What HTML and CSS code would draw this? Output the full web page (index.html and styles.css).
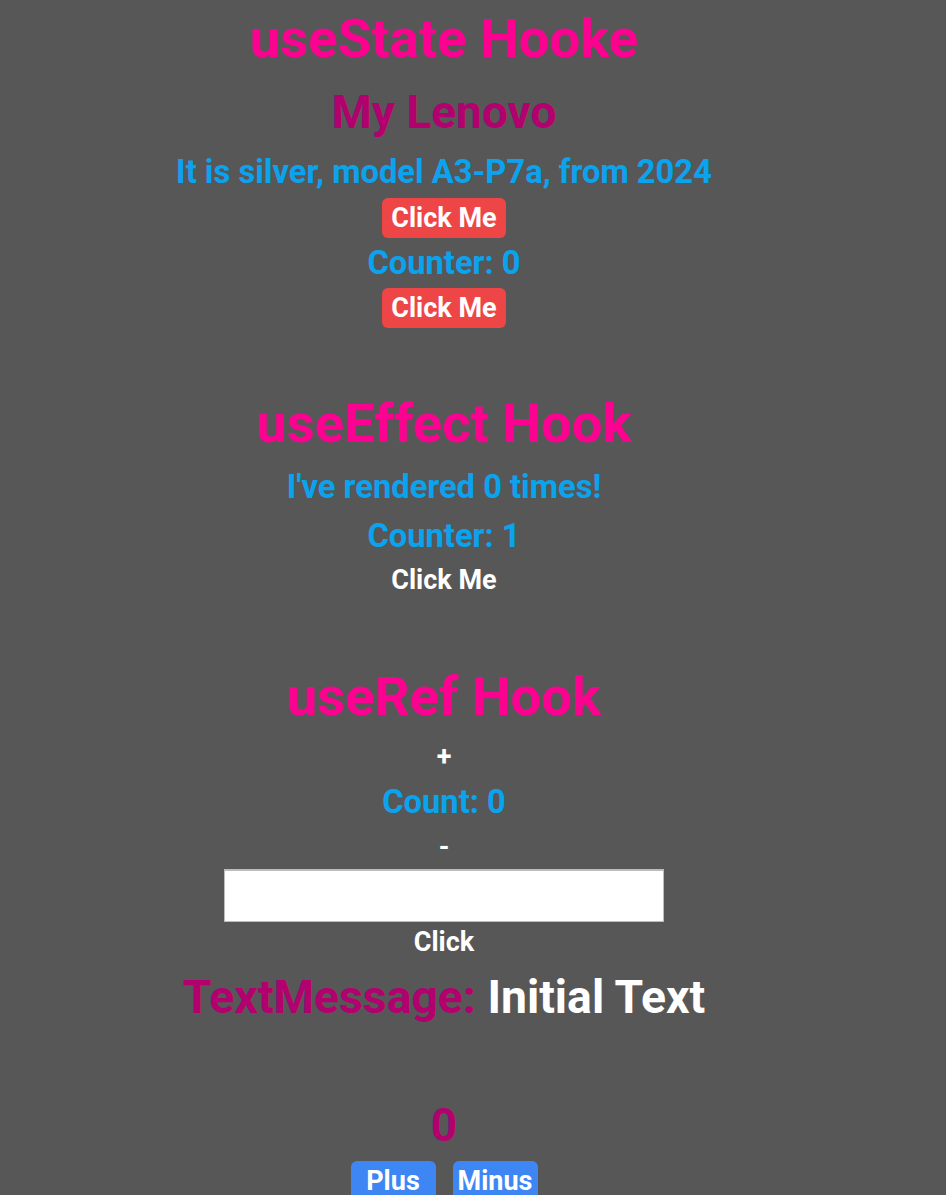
FILE: index.html
```html
<!DOCTYPE html>
<html lang="en">
<head>
<meta charset="utf-8">
<title>Hooks</title>
<link rel="stylesheet" href="styles.css">
</head>
<body>
<main class="app">
  <h1 class="title t-state">useState Hooke</h1>
  <h2 class="subtitle t-lenovo">My Lenovo</h2>
  <p class="info t-silver">It is silver, model A3-P7a, from 2024</p>
  <button class="btn-red b-1">Click Me</button>
  <p class="info t-counter0">Counter: 0</p>
  <button class="btn-red b-2">Click Me</button>

  <h1 class="title t-effect">useEffect Hook</h1>
  <p class="info t-rendered">I've rendered 0 times!</p>
  <p class="info t-counter1">Counter: 1</p>
  <button class="btn-plain t-click1">Click Me</button>

  <h1 class="title t-ref">useRef Hook</h1>
  <button class="btn-plain t-plus">+</button>
  <p class="info t-count">Count: 0</p>
  <button class="btn-plain t-minus">-</button>
  <input class="field" type="text">
  <button class="btn-plain t-click2">Click</button>
  <p class="message"><span class="msg-label">TextMessage:</span> <span class="msg-value">Initial Text</span></p>

  <p class="number">0</p>
  <div class="btn-row">
    <button class="btn-blue">Plus</button>
    <button class="btn-blue">Minus</button>
  </div>
</main>
</body>
</html>
```
FILE: styles.css
```css
html, body {
  margin: 0;
  padding: 0;
  background: #575757;
}
body {
  font-family: Roboto, "Noto Sans", Arial, sans-serif;
  font-weight: 700;
  height: 1195px;
  overflow: hidden;
}
.app {
  width: 888px;
  display: flex;
  flex-direction: column;
  align-items: center;
  padding-top: 6px;
}
h1, h2, p { margin: 0; }
button {
  font-family: inherit;
  font-weight: 700;
  border: none;
  cursor: pointer;
}
.title {
  font-size: 54.5px;
  line-height: 64px;
  color: #fb0390;
  font-weight: 700;
}
.subtitle {
  font-size: 46px;
  line-height: 56px;
  color: #b2006e;
  font-weight: 700;
}
.info {
  font-size: 32.7px;
  line-height: 40px;
  color: #0ba3ee;
}
.btn-red {
  background: #ee4647;
  color: #fff;
  font-size: 27px;
  line-height: 40px;
  height: 40px;
  padding: 0 9.5px;
  border-radius: 6px;
}
.btn-plain {
  background: transparent;
  color: #fff;
  font-size: 27px;
  line-height: 36px;
  height: 36px;
  padding: 0 6px;
}
.t-lenovo { margin-top: 14px; }
.t-silver { margin-top: 12px; }
.b-1 { margin-top: 6px; }
.t-counter0 { margin-top: 5px; }
.b-2 { margin-top: 5px; }
.t-effect { margin-top: 63px; }
.t-rendered { margin-top: 12px; }
.t-counter1 { margin-top: 9px; }
.t-click1 { margin-top: 6px; }
.t-ref { margin-top: 66px; }
.t-plus { margin-top: 11px; }
.t-count { margin-top: 7px; }
.t-minus { margin-top: 7px; }
.field {
  margin-top: 4px;
  width: 440px;
  height: 53px;
  box-sizing: border-box;
  border: 1px solid #bdbdbd;
  border-top-width: 2px;
  background: #fff;
  padding: 0 8px;
  font-size: 24px;
}
.t-click2 { margin-top: 2px; }
.message {
  margin-top: 9px;
  font-size: 46.3px;
  line-height: 56px;
}
.msg-label { color: #b2006e; }
.msg-value { color: #fff; }
.number {
  margin-top: 72px;
  font-size: 46px;
  line-height: 56px;
  color: #b2006e;
}
.btn-row {
  margin-top: 8px;
  display: flex;
  gap: 17px;
}
.btn-blue {
  width: 85px;
  height: 40px;
  padding: 0;
  background: #3f86f5;
  color: #fff;
  font-size: 27px;
  line-height: 40px;
  border-radius: 6px;
}
```
